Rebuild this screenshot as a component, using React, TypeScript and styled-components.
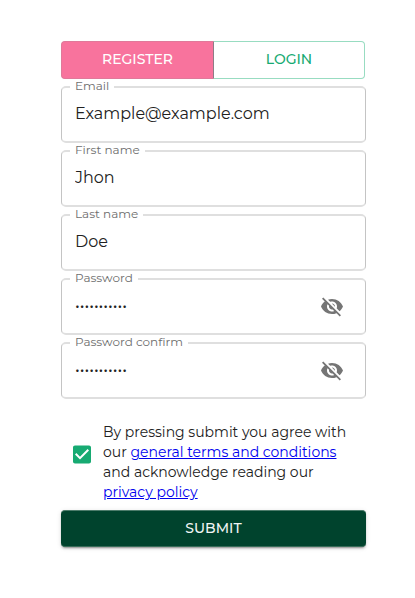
import React, { useState } from "react";
import styled, { createGlobalStyle } from "styled-components";

const GlobalStyle = createGlobalStyle`
  *, *::before, *::after { box-sizing: border-box; }
  body {
    margin: 0;
    background: #fff;
    color: #212121;
    font-family: Montserrat, Inter, "Open Sans", sans-serif;
  }
`;

const Page = styled.main`
  width: 415px;
  height: 598px;
  padding: 41px 49px 0 61px;
  overflow: hidden;
`;

const Form = styled.form`
  display: flex;
  flex-direction: column;
  width: 305px;
`;

const Tabs = styled.div`
  display: flex;
  width: 304px;
  height: 38px;
  margin-bottom: 7px;
`;

const Tab = styled.button<{ $active?: boolean }>`
  width: ${(p) => (p.$active ? 153 : 151)}px;
  padding: 0 0 2px;
  font: 500 14px Montserrat, Inter, sans-serif;
  letter-spacing: -0.03px;
  color: ${(p) => (p.$active ? "#fff" : "#17aa72")};
  background: ${(p) => (p.$active ? "#f8739d" : "#fff")};
  border: 1px solid ${(p) => (p.$active ? "#e0799a" : "#98dcc1")};
  border-right-color: ${(p) => (p.$active ? "#8f7c86" : "#98dcc1")};
  border-left-width: ${(p) => (p.$active ? 1 : 0)}px;
  border-radius: ${(p) => (p.$active ? "4px 0 0 4px" : "0 4px 4px 0")};
`;

const FieldBox = styled.label`
  position: relative;
  display: flex;
  align-items: center;
  height: 57px;
  margin-bottom: 7px;
  padding: 0 21px 2px 13px;
  border: 1px solid #c4c4c4;
  border-top: 2px solid #dfdfdf;
  border-bottom: 2px solid #dfdfdf;
  border-radius: 5px;
`;

/* The white strip only spans the top border, leaving the field above intact. */
const FieldLabel = styled.span<{ $width: number }>`
  position: absolute;
  top: -10px;
  left: 8px;
  width: ${(p) => p.$width}px;
  height: 15px;
  padding-left: 5px;
  background: linear-gradient(#fff, #fff) 0 7px / 100% 4px no-repeat;
`;

const LabelText = styled.span`
  display: block;
  width: max-content;
  color: #6e6e6e;
  font-size: 16px;
  line-height: 20px;
  white-space: nowrap;
  transform: translateY(0.6px) scale(0.75);
  transform-origin: 0 0;
`;

const Input = styled.input`
  flex: 1;
  min-width: 0;
  height: 23px;
  padding: 0;
  border: 0;
  outline: 0;
  background: transparent;
  color: #212121;
  font: 400 16px Montserrat, Inter, sans-serif;
`;

const EyeIcon = styled.svg`
  width: 24px;
  height: 24px;
  margin-top: 1px;
  fill: #757575;
`;

const Terms = styled.div`
  display: flex;
  align-items: flex-start;
  height: 80px;
  margin: 16px 0 8px;
  padding-left: 9px;
`;

const CheckIcon = styled.svg`
  width: 24px;
  height: 24px;
  margin: 20px 9px 0 0;
  fill: #17aa72;
`;

const TermsText = styled.p`
  margin: 0;
  font-size: 14px;
  line-height: 20px;
  white-space: nowrap;
`;

const Link = styled.a`
  color: #0000ee;
  text-decoration: underline;
`;

const Submit = styled.button`
  height: 37px;
  padding: 0 0 1px;
  border: 0;
  border-top: 1px solid #4d7c6b;
  border-bottom: 1px solid #386d59;
  border-radius: 4px;
  background: #00432d;
  color: #f0f5f3;
  font: 500 14px Montserrat, Inter, sans-serif;
  box-shadow: 0 3px 1px -2px rgba(0, 0, 0, 0.2), 0 2px 2px rgba(0, 0, 0, 0.14),
    0 1px 5px rgba(0, 0, 0, 0.12);
`;

const VisibilityOff = () => (
  <EyeIcon viewBox="0 -0.5 24 24">
    <path d="M12 7c2.76 0 5 2.24 5 5 0 .65-.13 1.26-.36 1.83l2.92 2.92c1.51-1.26 2.7-2.89 3.43-4.75-1.73-4.39-6-7.5-11-7.5-1.4 0-2.74.25-3.98.7l2.16 2.16C10.74 7.13 11.35 7 12 7zM2 4.27l2.28 2.28.46.46C3.08 8.3 1.78 10.02 1 12c1.73 4.39 6 7.5 11 7.5 1.55 0 3.03-.3 4.38-.84l.42.42L19.73 22 21 20.73 3.27 3 2 4.27zM7.53 9.8l1.55 1.55c-.05.21-.08.43-.08.65 0 1.66 1.34 3 3 3 .22 0 .44-.03.65-.08l1.55 1.55c-.67.33-1.41.53-2.2.53-2.76 0-5-2.24-5-5 0-.79.2-1.53.53-2.2zm4.31-.78l3.15 3.15.02-.16c0-1.66-1.34-3-3-3l-.17.01z" />
  </EyeIcon>
);

interface FieldProps {
  label: string;
  initial: string;
  notch: number;
  secret?: boolean;
}

const Field = ({ label, initial, notch, secret }: FieldProps) => {
  const [value, setValue] = useState(initial);
  return (
    <FieldBox>
      <FieldLabel $width={notch}>
        <LabelText>{label}</LabelText>
      </FieldLabel>
      <Input
        type={secret ? "password" : "text"}
        value={value}
        onChange={(e) => setValue(e.target.value)}
      />
      {secret && <VisibilityOff />}
    </FieldBox>
  );
};

export default function App() {
  return (
    <>
      <GlobalStyle />
      <Page>
        <Form onSubmit={(e) => e.preventDefault()}>
          <Tabs>
            <Tab type="button" $active>REGISTER</Tab>
            <Tab type="button">LOGIN</Tab>
          </Tabs>
          <Field label="Email" initial="Example@example.com" notch={44} />
          <Field label="First name" initial="Jhon" notch={75} />
          <Field label="Last name" initial="Doe" notch={73} />
          <Field label="Password" initial="password123" notch={68} secret />
          <Field label="Password confirm" initial="password123" notch={118} secret />
          <Terms>
            <CheckIcon viewBox="0 -0.5 24 24">
              <path d="M19 3H5c-1.11 0-2 .9-2 2v14c0 1.1.89 2 2 2h14c1.11 0 2-.9 2-2V5c0-1.1-.89-2-2-2zm-9 14l-5-5 1.41-1.41L10 14.17l7.59-7.59L19 8l-9 9z" />
            </CheckIcon>
            <TermsText>
              By pressing submit you agree with<br />
              our <Link href="#terms">general terms and conditions</Link><br />
              and acknowledge reading our<br />
              <Link href="#privacy">privacy policy</Link>
            </TermsText>
          </Terms>
          <Submit type="submit">SUBMIT</Submit>
        </Form>
      </Page>
    </>
  );
}
